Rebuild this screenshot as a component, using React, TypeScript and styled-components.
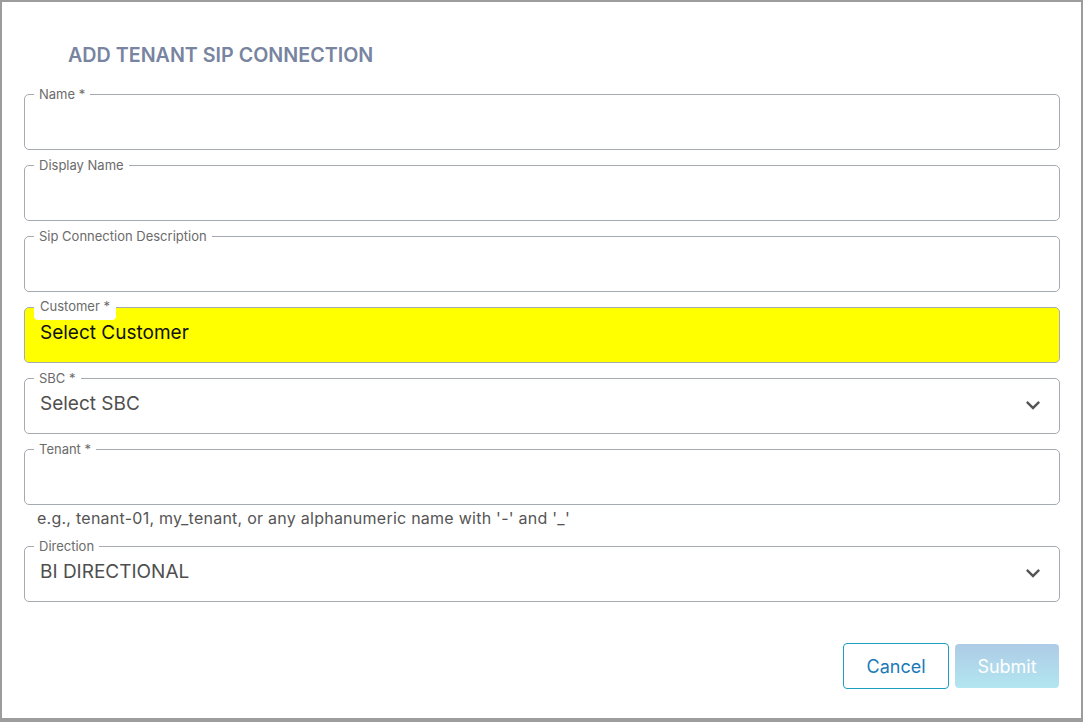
import styled, { createGlobalStyle } from 'styled-components';

const GlobalStyle = createGlobalStyle`
  html, body {
    margin: 0;
    padding: 0;
    background: #9c9c9c;
    font-family: Inter, "Noto Sans", "Liberation Sans", sans-serif;
  }
`;

interface FieldDef {
  label: string;
  value?: string;
  select?: boolean;
  highlight?: boolean;
  dark?: boolean;
  helper?: string;
}

const fields: FieldDef[] = [
  { label: 'Name *' },
  { label: 'Display Name' },
  { label: 'Sip Connection Description' },
  { label: 'Customer *', value: 'Select Customer', highlight: true, dark: true },
  { label: 'SBC *', value: 'Select SBC', select: true },
  { label: 'Tenant *', helper: "e.g., tenant-01, my_tenant, or any alphanumeric name with '-' and '_'" },
  { label: 'Direction', value: 'BI DIRECTIONAL', select: true },
];

function ExpandIcon() {
  return (
    <Chevron viewBox="0 0 24 24" width={28} height={28}>
      <path d="M16.59 8.59 12 13.17 7.41 8.59 6 10l6 6 6-6z" fill="currentColor" />
    </Chevron>
  );
}

export default function App() {
  return (
    <>
      <GlobalStyle />
      <Backdrop>
        <Dialog>
          <Title>ADD TENANT SIP CONNECTION</Title>
          <Form>
            {fields.map((f) => (
              <FieldGroup key={f.label}>
                <Field $highlight={f.highlight}>
                  <Label $highlight={f.highlight}>{f.label}</Label>
                  <Value $dark={f.dark}>{f.value}</Value>
                  {f.select && <ExpandIcon />}
                </Field>
                {f.helper && <Helper>{f.helper}</Helper>}
              </FieldGroup>
            ))}
          </Form>
          <Actions>
            <CancelButton>Cancel</CancelButton>
            <SubmitButton disabled>Submit</SubmitButton>
          </Actions>
        </Dialog>
      </Backdrop>
    </>
  );
}

const Backdrop = styled.div`
  width: 1083px;
  height: 722px;
  padding: 2px 2px 4px 2px;
  box-sizing: border-box;
  background: #9c9c9c;
`;

const Dialog = styled.div`
  height: 716px;
  box-sizing: border-box;
  background: #fff;
  padding: 41px 21px 29px 22px;
  display: flex;
  flex-direction: column;
`;

const Title = styled.h2`
  margin: 0 0 27px 44px;
  font-size: 19.7px;
  line-height: 24px;
  font-weight: 600;
  color: #7884a0;
`;

const Form = styled.div`
  display: flex;
  flex-direction: column;
  gap: 15px;
`;

const FieldGroup = styled.div`
  display: flex;
  flex-direction: column;
`;

const Field = styled.div<{ $highlight?: boolean }>`
  position: relative;
  height: 56px;
  box-sizing: border-box;
  border: 1px solid #a6aab2;
  border-radius: 5px;
  background: ${(p) => (p.$highlight ? '#ffff00' : '#fff')};
  display: flex;
  align-items: center;
  padding: 0 12px 5px 15px;
`;

const Label = styled.span<{ $highlight?: boolean }>`
  position: absolute;
  left: 9px;
  top: ${(p) => (p.$highlight ? '-11px' : '-9px')};
  padding: ${(p) => (p.$highlight ? '1px 6px 6px' : '0 5px')};
  border-radius: ${(p) => (p.$highlight ? '4px' : '0')};
  background: #fff;
  font-size: 13px;
  line-height: 16px;
  color: #6b6b6b;
`;

const Value = styled.span<{ $dark?: boolean }>`
  flex: 1;
  font-size: 19px;
  line-height: 24px;
  color: ${(p) => (p.$dark ? '#111' : '#4f4f4f')};
`;

const Chevron = styled.svg`
  color: #555;
  margin-top: 2px;
`;

const Helper = styled.div`
  margin: 3px 0 3px 13px;
  font-size: 16px;
  line-height: 20px;
  letter-spacing: 0.25px;
  color: #555;
`;

const Actions = styled.div`
  margin-top: auto;
  display: flex;
  justify-content: flex-end;
  align-items: center;
  gap: 6px;
  padding-right: 1px;
`;

const BaseButton = styled.button`
  height: 46px;
  box-sizing: border-box;
  border-radius: 4px;
  font-family: inherit;
  font-size: 18px;
  padding: 0;
`;

const CancelButton = styled(BaseButton)`
  width: 106px;
  background: #fff;
  border: 1px solid #1f9fc0;
  color: #1a7ab8;
  cursor: pointer;
`;

const SubmitButton = styled(BaseButton)`
  width: 104px;
  height: 44px;
  border: none;
  color: #fff;
  background: linear-gradient(180deg, #aecbe6 0%, #b2e6f0 100%);
`;
